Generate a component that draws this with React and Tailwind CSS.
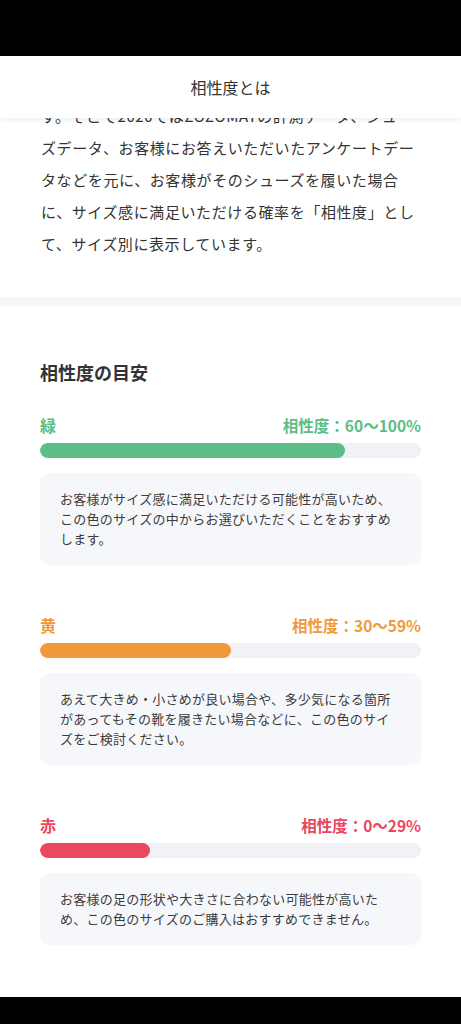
const levels = [
  {
    name: "緑",
    range: "相性度：60〜100%",
    text: "text-[#5cbd86]",
    fill: "bg-[#5cbd86]",
    width: "80%",
    desc: "お客様がサイズ感に満足いただける可能性が高いため、この色のサイズの中からお選びいただくことをおすすめします。",
  },
  {
    name: "黄",
    range: "相性度：30〜59%",
    text: "text-[#f09b3b]",
    fill: "bg-[#f09b3b]",
    width: "50%",
    desc: "あえて大きめ・小さめが良い場合や、多少気になる箇所があってもその靴を履きたい場合などに、この色のサイズをご検討ください。",
  },
  {
    name: "赤",
    range: "相性度：0〜29%",
    text: "text-[#ea4760]",
    fill: "bg-[#ea4760]",
    width: "29%",
    desc: "お客様の足の形状や大きさに合わない可能性が高いため、この色のサイズのご購入はおすすめできません。",
  },
];

function Level({ item, first }) {
  return (
    <div className={first ? "mt-[28px]" : "mt-[48px]"}>
      <div className={`flex items-center justify-between leading-[24px] font-bold ${item.text}`}>
        <span className="text-[16px]">{item.name}</span>
        <span className="text-[15.5px]">{item.range}</span>
      </div>
      <div className="mt-[6px] h-[15px] rounded-full bg-[#f1f2f6] overflow-hidden">
        <div className={`h-full rounded-full ${item.fill}`} style={{ width: item.width }} />
      </div>
      <div className="mt-[15px] rounded-[10px] bg-[#f6f7fb] px-5 py-4 text-[13px] leading-5 tracking-[0.02em] text-[#3c3c3c]">
        {item.desc}
      </div>
    </div>
  );
}

export default function App() {
  return (
    <div
      className="w-[461px] h-[1024px] flex flex-col bg-black overflow-hidden"
      style={{ fontFamily: '"Noto Sans CJK JP", "Noto Sans", sans-serif' }}
    >
      <div className="h-[56px] shrink-0 bg-black" />
      <div className="h-[941px] shrink-0 flex flex-col bg-white overflow-hidden">
        <header className="relative z-10 h-[62px] shrink-0 flex items-center justify-center bg-white shadow-[0_2px_5px_rgba(0,0,0,0.07)]">
          <h1 className="text-[16px] text-[#333]">相性度とは</h1>
        </header>
        <div className="-mt-[18px]">
          <section className="px-[41px] pb-[37px]">
            <p className="text-[15px] leading-[32px] tracking-[0.04em] text-[#333]">
              す。そこで2020ではZOZOMATの計測データ、シューズデータ、お客様にお答えいただいたアンケートデータなどを元に、お客様がそのシューズを履いた場合に、サイズ感に満足いただける確率を「相性度」として、サイズ別に表示しています。
            </p>
          </section>
          <div className="h-[9px] bg-[#f6f7fb]" />
          <section className="px-[40px] pt-[53px]">
            <h2 className="text-[18px] leading-[26px] font-bold text-[#333]">相性度の目安</h2>
            {levels.map((l, i) => (
              <Level key={l.name} item={l} first={i === 0} />
            ))}
          </section>
        </div>
      </div>
      <div className="flex-1 bg-black" />
    </div>
  );
}
